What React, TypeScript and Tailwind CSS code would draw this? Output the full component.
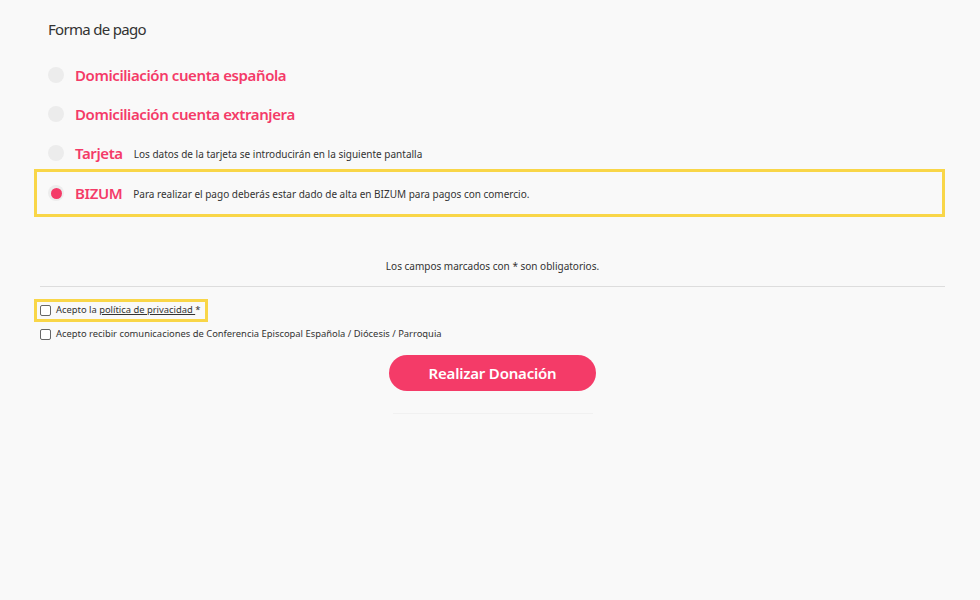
const options = [
  { id: "es", label: "Domiciliación cuenta española" },
  { id: "ext", label: "Domiciliación cuenta extranjera" },
  { id: "card", label: "Tarjeta", note: "Los datos de la tarjeta se introducirán en la siguiente pantalla" },
]

function Radio({ checked }: { checked?: boolean }) {
  return (
    <span className="flex h-4 w-4 shrink-0 items-center justify-center rounded-full bg-[#ececec]">
      {checked && <span className="h-[11px] w-[11px] rounded-full bg-[#f43b68]" />}
    </span>
  )
}

export default function App() {
  return (
    <div
      className="min-h-[600px] w-[980px] bg-[#f9f9f9] text-[#333]"
      style={{ fontFamily: '"Noto Sans", "Open Sans", sans-serif' }}
    >
      <div className="pl-[40px] pr-[35px] pt-[18px]">
        <h2 className="pl-[8px] text-[15px] leading-[22px] tracking-[-0.7px] text-[#333]">Forma de pago</h2>

        <div className="mt-[26px] flex flex-col gap-[21px] pl-[8px]">
          {options.map((o) => (
            <label key={o.id} className="flex h-[18px] items-center">
              <Radio />
              <span className="ml-[11px] text-[15px] font-semibold tracking-[-0.4px] text-[#f43b68]">{o.label}</span>
              {o.note && <span className="ml-[11px] mt-[2px] text-[10px]">{o.note}</span>}
            </label>
          ))}
        </div>

        <div className="-ml-[6px] mt-[7px] flex h-[48px] items-center border-[3px] border-[#f9d648] pl-[11px] pr-[5px]">
          <Radio checked />
          <span className="ml-[11px] text-[15px] font-semibold tracking-[-0.4px] text-[#f43b68]">BIZUM</span>
          <span className="ml-[11px] mt-[2px] text-[10px]">
            Para realizar el pago deberás estar dado de alta en BIZUM para pagos con comercio.
          </span>
        </div>

        <p className="mt-[41px] text-center text-[10px] leading-[16px]">Los campos marcados con * son obligatorios.</p>
        <hr className="mt-[12px] border-t border-[#dddddd]" />

        <div className="mt-[12px] flex flex-col items-start gap-[2px]">
          <label className="-ml-[6px] flex h-[23px] items-center border-[3px] border-[#f9d648] pl-[3px] pr-[5px] text-[9.4px]">
            <span className="h-[11px] w-[11px] rounded-[2px] border border-[#666] bg-white" />
            <span className="ml-[5px]">
              Acepto la <a className="underline">política de privacidad </a>*
            </span>
          </label>
          <label className="flex h-[20px] items-center text-[9.4px]">
            <span className="h-[11px] w-[11px] rounded-[2px] border border-[#666] bg-white" />
            <span className="ml-[5px]">Acepto recibir comunicaciones de Conferencia Episcopal Española / Diócesis / Parroquia</span>
          </label>
        </div>

        <div className="mt-[11px] flex flex-col items-center">
          <button className="h-[36px] w-[207px] rounded-full bg-[#f43b68] text-[15px] font-semibold tracking-[-0.2px] text-white">
            Realizar Donación
          </button>
          <div className="mt-[22px] h-px w-[200px] bg-[#f1f1f1]" />
        </div>
      </div>
    </div>
  )
}
